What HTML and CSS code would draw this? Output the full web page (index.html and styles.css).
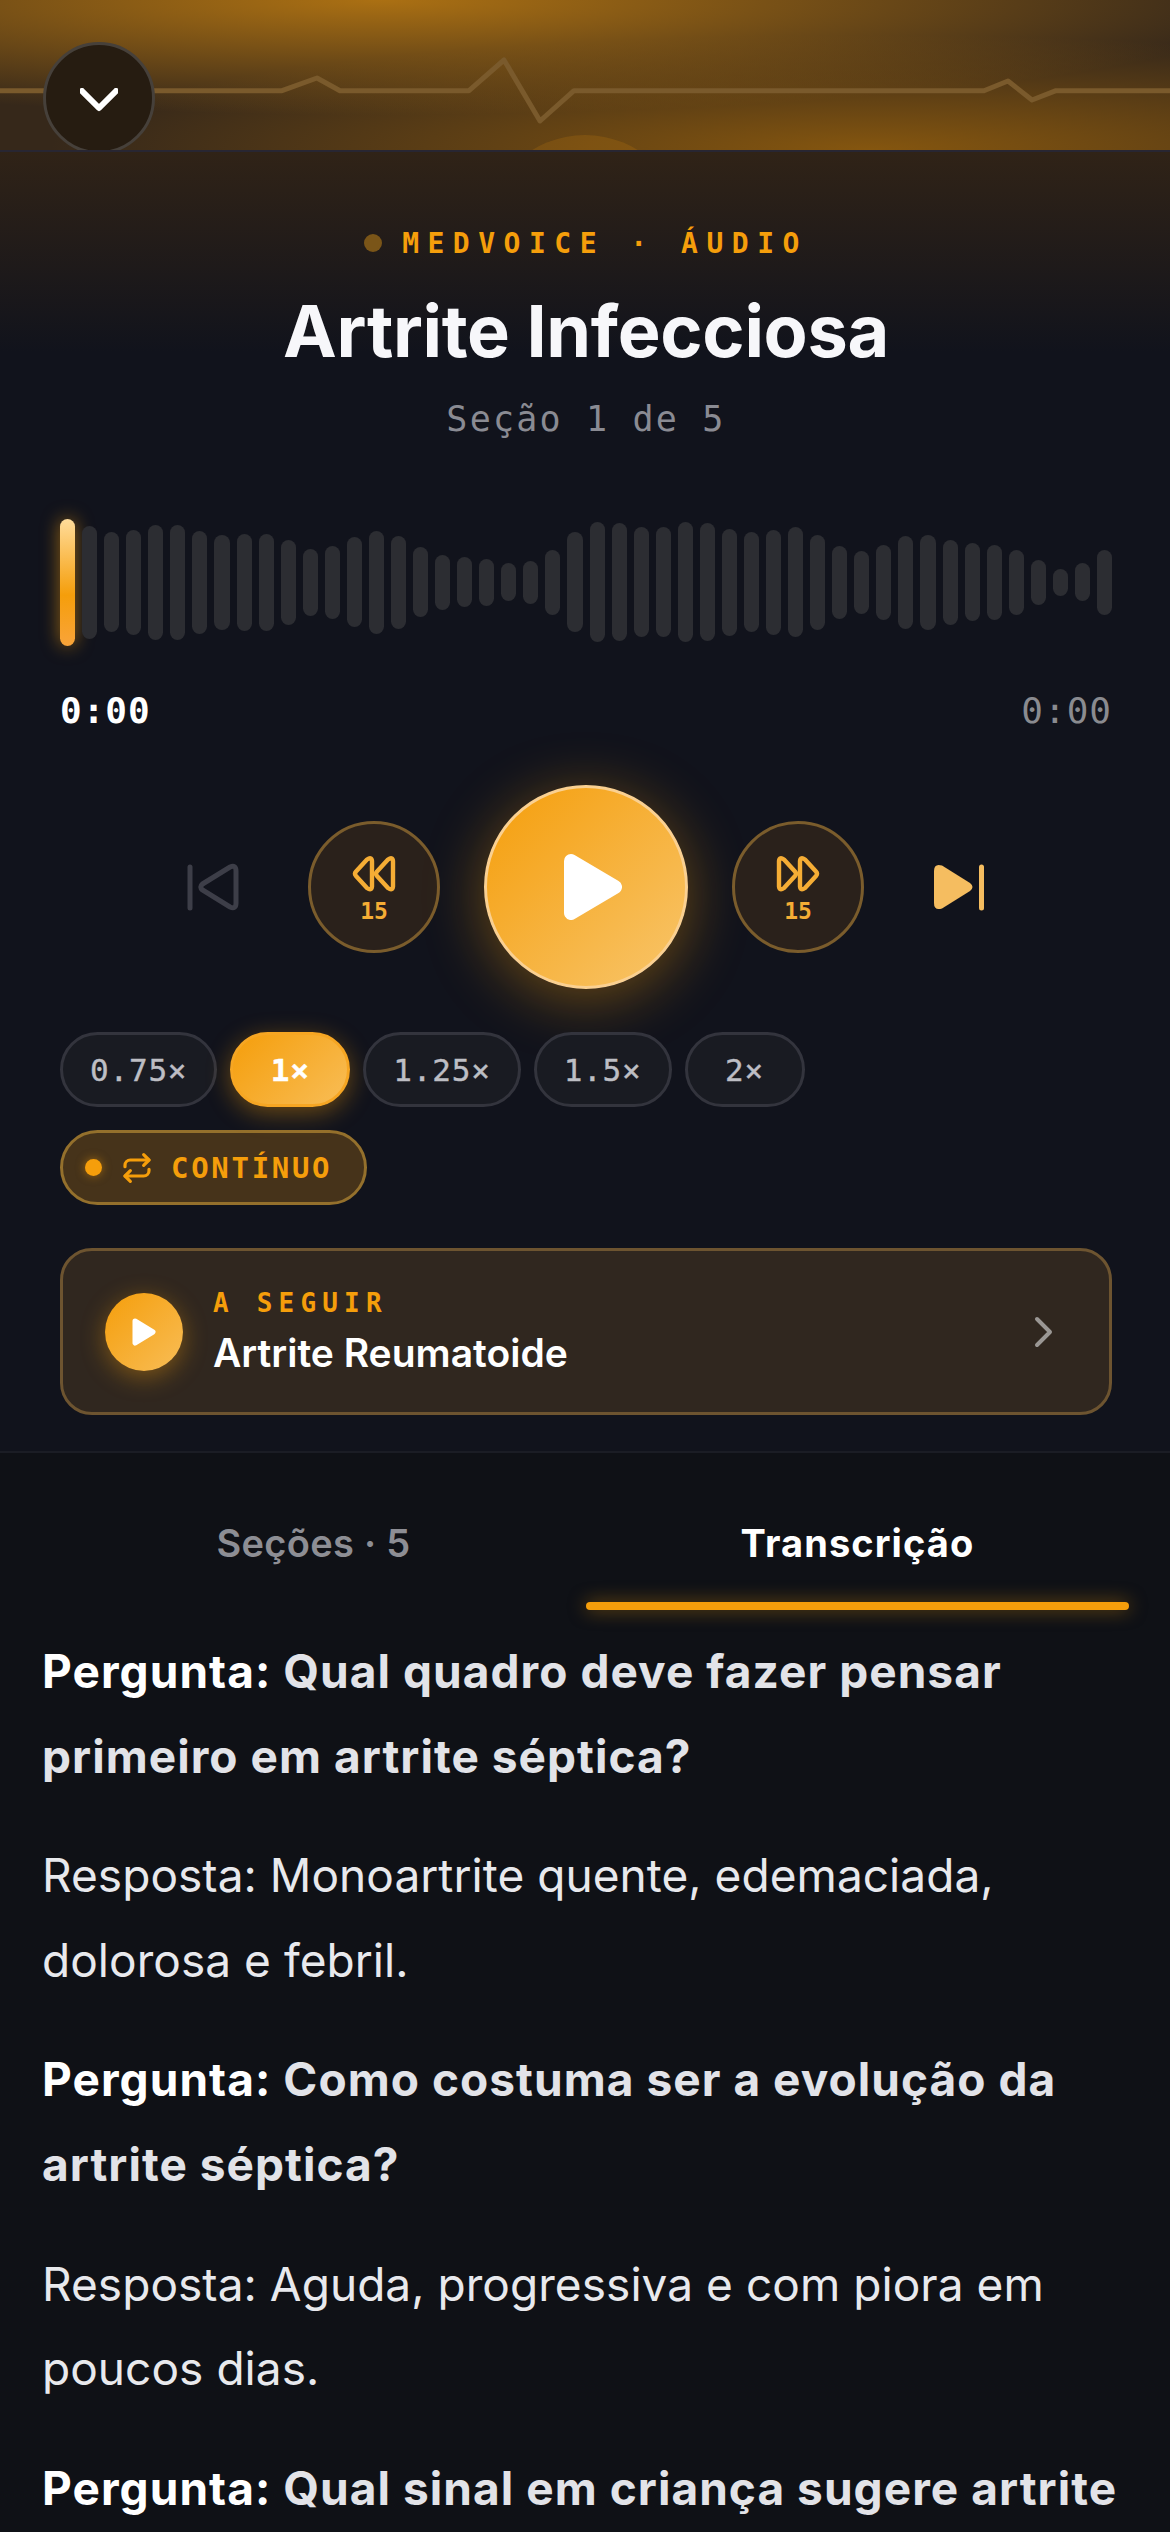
FILE: index.html
```html
<!doctype html>
<html lang="pt-BR">
<head>
    <meta charset="UTF-8">
    <title>Artrite Infecciosa</title>
    <link rel="stylesheet" href="styles.css">
</head>
<body>
<div class="hero">
    <svg class="hero-art" viewBox="0 0 1170 150">
        <circle cx="585" cy="235" r="100" fill="#f59e0b" fill-opacity=".14"/>
        <polyline points="0,90.7 282,90.7 317,78 340,90.7 469,90.7 504,60 540,121 574,90.7 984,90.7 1008,81 1032,100 1056,90.7 1170,90.7" fill="none" stroke="#7a5a2c" stroke-width="5" stroke-linejoin="round"/>
    </svg>
    <button class="back-btn">
        <svg width="38" height="24" viewBox="0 0 38 24"><path d="M2 3 L19 20 L36 3" fill="none" stroke="#fff" stroke-width="6" stroke-linecap="round" stroke-linejoin="round"/></svg>
    </button>
</div>

<div class="player">
    <div class="eyebrow"><i class="eyebrow-dot"></i><span>MEDVOICE · ÁUDIO</span></div>
    <h1 class="title">Artrite Infecciosa</h1>
    <div class="subtitle">Seção 1 de 5</div>

    <div class="wave">
        <span class="bar bar-on" style="height:127px"></span>
        <span class="bar" style="height:113px"></span>
        <span class="bar" style="height:100px"></span>
        <span class="bar" style="height:105px"></span>
        <span class="bar" style="height:115px"></span>
        <span class="bar" style="height:115px"></span>
        <span class="bar" style="height:103px"></span>
        <span class="bar" style="height:95px"></span>
        <span class="bar" style="height:97px"></span>
        <span class="bar" style="height:97px"></span>
        <span class="bar" style="height:85px"></span>
        <span class="bar" style="height:67px"></span>
        <span class="bar" style="height:73px"></span>
        <span class="bar" style="height:90px"></span>
        <span class="bar" style="height:103px"></span>
        <span class="bar" style="height:93px"></span>
        <span class="bar" style="height:70px"></span>
        <span class="bar" style="height:55px"></span>
        <span class="bar" style="height:50px"></span>
        <span class="bar" style="height:47px"></span>
        <span class="bar" style="height:38px"></span>
        <span class="bar" style="height:43px"></span>
        <span class="bar" style="height:65px"></span>
        <span class="bar" style="height:100px"></span>
        <span class="bar" style="height:120px"></span>
        <span class="bar" style="height:118px"></span>
        <span class="bar" style="height:110px"></span>
        <span class="bar" style="height:110px"></span>
        <span class="bar" style="height:120px"></span>
        <span class="bar" style="height:118px"></span>
        <span class="bar" style="height:107px"></span>
        <span class="bar" style="height:100px"></span>
        <span class="bar" style="height:105px"></span>
        <span class="bar" style="height:110px"></span>
        <span class="bar" style="height:95px"></span>
        <span class="bar" style="height:73px"></span>
        <span class="bar" style="height:63px"></span>
        <span class="bar" style="height:75px"></span>
        <span class="bar" style="height:93px"></span>
        <span class="bar" style="height:95px"></span>
        <span class="bar" style="height:85px"></span>
        <span class="bar" style="height:78px"></span>
        <span class="bar" style="height:75px"></span>
        <span class="bar" style="height:65px"></span>
        <span class="bar" style="height:45px"></span>
        <span class="bar" style="height:27px"></span>
        <span class="bar" style="height:38px"></span>
        <span class="bar" style="height:65px"></span>
    </div>

    <div class="times">
        <span class="time-now">0:00</span>
        <span class="time-end">0:00</span>
    </div>

    <div class="controls">
        <button class="skip-btn">
            <svg width="52" height="48" viewBox="0 0 52 48" fill="none" stroke="#3d3e48" stroke-width="5" stroke-linecap="round"><path d="M3 4 V45"/><path d="M15.5 21 L43 4 Q49 1.5 49 8 V40 Q49 46.5 43 44 L15.5 27 Q12 24 15.5 21 Z"/></svg>
        </button>
        <button class="seek-btn">
            <svg width="46" height="40" viewBox="4 3 46 40" fill="none" stroke="#f5ad35" stroke-width="4.4" stroke-linejoin="round"><path d="M9 20.5 L20 8.5 Q24.5 5.5 25 10 V35.5 Q24.5 40 20 37 L9 25 Q7 22.7 9 20.5 Z"/><path d="M30 20.5 L41 8.5 Q45.5 5.5 46 10 V35.5 Q45.5 40 41 37 L30 25 Q28 22.7 30 20.5 Z"/></svg>
            <span class="seek-num">15</span>
        </button>
        <button class="play-btn">
            <svg width="58" height="66" viewBox="0 0 58 66"><path d="M7 7 L51 33 L7 59 Z" fill="#fff" stroke="#fff" stroke-width="14" stroke-linejoin="round"/></svg>
        </button>
        <button class="seek-btn">
            <svg class="flip" width="46" height="40" viewBox="4 3 46 40" fill="none" stroke="#f5ad35" stroke-width="4.4" stroke-linejoin="round"><path d="M9 20.5 L20 8.5 Q24.5 5.5 25 10 V35.5 Q24.5 40 20 37 L9 25 Q7 22.7 9 20.5 Z"/><path d="M30 20.5 L41 8.5 Q45.5 5.5 46 10 V35.5 Q45.5 40 41 37 L30 25 Q28 22.7 30 20.5 Z"/></svg>
            <span class="seek-num">15</span>
        </button>
        <button class="skip-btn">
            <svg width="52" height="48" viewBox="0 0 52 48"><path d="M1 8 Q1 0 9 2.5 L37 20 Q42 24 37 28 L9 45.5 Q1 48 1 40 Z" fill="#f5bd60"/><path d="M48.5 4 V45" fill="none" stroke="#f5bd60" stroke-width="5" stroke-linecap="round"/></svg>
        </button>
    </div>

    <div class="speeds">
        <button class="pill">0.75×</button>
        <button class="pill pill-on">1×</button>
        <button class="pill">1.25×</button>
        <button class="pill">1.5×</button>
        <button class="pill">2×</button>
    </div>

    <button class="loop-pill">
        <i class="loop-dot"></i>
        <svg width="32" height="32" viewBox="0 0 24 24" fill="none" stroke="#f59e0b" stroke-width="2.4" stroke-linecap="round" stroke-linejoin="round"><path d="m17 2 4 4-4 4"/><path d="M3 11v-1a4 4 0 0 1 4-4h14"/><path d="m7 22-4-4 4-4"/><path d="M21 13v1a4 4 0 0 1-4 4H3"/></svg>
        <span>CONTÍNUO</span>
    </button>

    <div class="next-card">
        <div class="next-play">
            <svg width="26" height="30" viewBox="0 0 26 30"><path d="M4 4 L22 15 L4 26 Z" fill="#fff" stroke="#fff" stroke-width="5" stroke-linejoin="round"/></svg>
        </div>
        <div class="next-text">
            <div class="next-label">A SEGUIR</div>
            <div class="next-title">Artrite Reumatoide</div>
        </div>
        <svg class="next-arrow" width="22" height="34" viewBox="0 0 22 34"><path d="M4 4 L17 17 L4 30" fill="none" stroke="#9a9794" stroke-width="4" stroke-linecap="round" stroke-linejoin="round"/></svg>
    </div>
</div>

<div class="lower">
    <div class="tabs">
        <div class="tab">Seções · 5</div>
        <div class="tab tab-on">Transcrição</div>
    </div>
    <div class="transcript">
        <p class="q"><b>Pergunta:</b> Qual quadro deve fazer pensar primeiro em artrite séptica?</p>
        <p>Resposta: Monoartrite quente, edemaciada, dolorosa e febril.</p>
        <p class="q"><b>Pergunta:</b> Como costuma ser a evolução da artrite séptica?</p>
        <p>Resposta: Aguda, progressiva e com piora em poucos dias.</p>
        <p class="q"><b>Pergunta:</b> Qual sinal em criança sugere artrite séptica?</p>
    </div>
</div>
</body>
</html>
```

FILE: styles.css
```css
html,body{
    margin:0;
    padding:0;
    height:2532px;
    overflow:hidden;
    background:#0f1116;
}
body{
    font-family:"Inter","Liberation Sans",sans-serif;
    color:#f5f5f8;
}
button{
    font:inherit;
    color:inherit;
    background:none;
    border:0;
    padding:0;
    cursor:pointer;
}
h1,p{
    margin:0;
}
.hero{
    height:152px;
    position:relative;
    overflow:hidden;
    box-sizing:border-box;
    border-bottom:2px solid #282632;
    background:
        radial-gradient(ellipse 900px 115px at 380px 0,#ab7013 0%,rgba(171,112,19,0) 100%),
        radial-gradient(ellipse 820px 115px at 870px 150px,#85560f 0%,rgba(133,86,15,0) 100%),
        #36281a;
}
.hero-art{
    position:absolute;
    top:0;
    left:0;
    width:1170px;
    height:150px;
}
.back-btn{
    position:absolute;
    left:43px;
    top:42px;
    width:112px;
    height:112px;
    box-sizing:border-box;
    border-radius:50%;
    border:3px solid #46403a;
    background:#261c11;
    display:flex;
    align-items:center;
    justify-content:center;
    padding-top:3px;
}
.player{
    height:1301px;
    box-sizing:border-box;
    padding:0 58px 0 60px;
    border-bottom:2px solid #1b1d25;
    background:linear-gradient(#302317 0,#11131c 200px);
}
.eyebrow{
    display:flex;
    align-items:center;
    justify-content:center;
    gap:20px;
    padding-top:72px;
    height:38px;
    font-family:"DejaVu Sans Mono",monospace;
    font-weight:700;
    font-size:28px;
    letter-spacing:8.5px;
    color:#f59e0b;
}
.eyebrow-dot{
    width:18px;
    height:18px;
    border-radius:50%;
    background:#7a5518;
}
.title{
    margin-top:24px;
    text-align:center;
    font-size:72px;
    line-height:90px;
    font-weight:700;
    letter-spacing:-.3px;
    color:#f7f7fa;
}
.subtitle{
    margin-top:18px;
    text-align:center;
    font-family:"DejaVu Sans Mono",monospace;
    font-size:35px;
    line-height:50px;
    letter-spacing:2.2px;
    color:#8a8b93;
}
.wave{
    margin-top:73px;
    height:130px;
    display:flex;
    align-items:center;
    gap:7px;
}
.bar{
    flex:1;
    border-radius:8px;
    background:#2c2d32;
}
.bar-on{
    background:linear-gradient(#ffdc9a,#f59e0b 60%,#f9a43a);
    box-shadow:0 0 18px rgba(245,158,11,.6);
}
.times{
    margin-top:42px;
    display:flex;
    justify-content:space-between;
    font-family:"DejaVu Sans Mono",monospace;
    font-size:36px;
    letter-spacing:1px;
    line-height:44px;
}
.time-now{
    font-weight:700;
    color:#fff;
}
.time-end{
    color:#8a8b90;
}
.controls{
    margin-top:51px;
    height:206px;
    display:flex;
    align-items:center;
    justify-content:center;
    gap:44px;
}
.skip-btn{
    width:102px;
    display:flex;
    justify-content:center;
}
.seek-btn{
    width:132px;
    height:132px;
    box-sizing:border-box;
    border-radius:50%;
    border:3px solid #7a5c2c;
    background:#2a211b;
    display:flex;
    flex-direction:column;
    align-items:center;
    justify-content:center;
    gap:8px;
}
.flip{
    transform:scaleX(-1);
}
.seek-num{
    font-family:"DejaVu Sans Mono",monospace;
    font-weight:700;
    font-size:23px;
    line-height:18px;
    color:#f5ad35;
}
.play-btn{
    width:204px;
    height:204px;
    box-sizing:border-box;
    border-radius:50%;
    border:3px solid #fad091;
    background:linear-gradient(135deg,#f59e0b,#f8c56b);
    box-shadow:0 10px 60px rgba(245,158,11,.4);
    display:flex;
    align-items:center;
    justify-content:center;
    padding-left:14px;
}
.speeds{
    margin-top:42px;
    display:flex;
    gap:13px;
}
.pill{
    height:75px;
    min-width:120px;
    box-sizing:border-box;
    padding:0 27px;
    border-radius:38px;
    border:3px solid #33343d;
    background:#191b22;
    font-family:"DejaVu Sans Mono",monospace;
    font-size:31px;
    letter-spacing:.8px;
    -webkit-text-stroke:.4px currentColor;
    color:#bdbec4;
}
.pill-on{
    border-color:#f6a623;
    background:linear-gradient(135deg,#f59e0b,#f8bd56);
    color:#fff;
    font-weight:700;
    box-shadow:0 6px 24px rgba(245,158,11,.4);
}
.loop-pill{
    margin-top:23px;
    height:75px;
    width:307px;
    box-sizing:border-box;
    padding-left:22px;
    display:flex;
    align-items:center;
    border-radius:38px;
    border:3px solid #94702c;
    background:#46331a;
    font-family:"DejaVu Sans Mono",monospace;
    font-size:29px;
    font-weight:700;
    letter-spacing:2.7px;
    color:#f59e0b;
}
.loop-dot{
    width:17px;
    height:17px;
    border-radius:50%;
    background:#f59e0b;
    box-shadow:0 0 10px rgba(245,158,11,.5);
    margin-right:19px;
}
.loop-pill svg{
    margin-right:18px;
}
.next-card{
    margin-top:43px;
    height:167px;
    box-sizing:border-box;
    padding:0 54px 0 42px;
    display:flex;
    align-items:center;
    border-radius:32px;
    border:3px solid #6d5430;
    background:#30271f;
}
.next-play{
    width:78px;
    height:78px;
    flex:none;
    border-radius:50%;
    background:linear-gradient(135deg,#f59e0b,#f8bd56);
    box-shadow:0 6px 24px rgba(245,158,11,.4);
    display:flex;
    align-items:center;
    justify-content:center;
}
.next-text{
    flex:1;
    margin-left:30px;
}
.next-label{
    font-family:"DejaVu Sans Mono",monospace;
    font-size:26px;
    font-weight:700;
    letter-spacing:6.2px;
    line-height:36px;
    color:#f59e0b;
}
.next-title{
    margin-top:6px;
    font-size:39px;
    font-weight:600;
    line-height:52px;
    color:#fff;
}
.lower{
    padding:0 41px 0 42px;
}
.tabs{
    display:flex;
    gap:1px;
}
.tab{
    flex:1;
    height:157px;
    box-sizing:border-box;
    padding-top:65px;
    text-align:center;
    font-size:38px;
    line-height:50px;
    font-weight:600;
    letter-spacing:.3px;
    color:#8d8e94;
    position:relative;
}
.tab-on{
    color:#fff;
    font-weight:700;
    letter-spacing:1.1px;
}
.tab-on::after{
    content:"";
    position:absolute;
    left:0;
    right:0;
    bottom:0;
    height:8px;
    border-radius:4px;
    background:#f59e0b;
    box-shadow:0 0 18px rgba(245,158,11,.5);
}
.transcript{
    margin-top:19px;
    font-size:46px;
    line-height:84.6px;
    letter-spacing:.05px;
    color:#e8e9ed;
}
.transcript p{
    margin-bottom:35px;
}
.q{
    font-weight:700;
    letter-spacing:1.05px;
    color:#e2e3e8;
}
.q b{
    font-weight:700;
    color:#fff;
}
```
